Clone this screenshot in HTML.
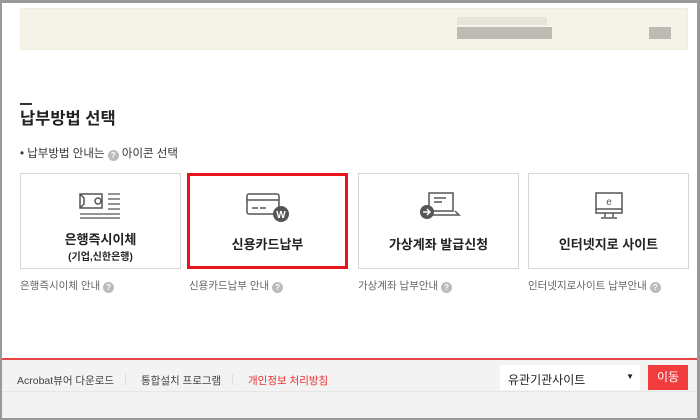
<!DOCTYPE html>
<html><head><meta charset="utf-8"><style>
*{margin:0;padding:0;box-sizing:border-box}
body{width:700px;height:420px;overflow:hidden;background:#999;font-family:"Liberation Sans","Noto Sans CJK KR",sans-serif;position:relative}
.main{position:absolute;left:2px;top:3px;width:695px;height:415px;background:#fff}
.top{position:absolute;left:18px;top:5px;width:668px;height:42px;background:#f5f2e7;border:1px solid #efece2}
.blur{position:absolute;background:#bdbbb4}
.ttl{position:absolute;left:18px;top:102px;font-size:16.5px;font-weight:bold;color:#222}
.dash{position:absolute;left:18px;top:100px;width:12px;height:2px;background:#333}
.bul{position:absolute;left:18px;top:142px;font-size:11.5px;color:#333}
.q{display:inline-block;width:11px;height:11px;border-radius:50%;background:#bbb;color:#fff;font-size:8px;text-align:center;line-height:11px;vertical-align:-1px;font-weight:bold}
.box{position:absolute;top:170px;height:96px;border:1px solid #d6d6d6;background:#fff;text-align:center}
.box.sel{border:3px solid #e8141b}
.box .t{position:absolute;left:0;right:0;top:60px;font-size:13px;font-weight:bold;color:#222}
.box svg{position:absolute;left:50%;transform:translateX(-50%);top:16px}
.cap{position:absolute;top:275px;font-size:10.5px;color:#666}
.foot{position:absolute;left:0;top:355px;width:695px;height:60px;background:#f3f3f3;border-top:2px solid #e84646}
.fl{position:absolute;top:13px;font-size:10.5px;color:#444}
.sep{position:absolute;top:14px;width:1px;height:11px;background:#ddd}
.selbox{position:absolute;left:498px;top:5px;width:140px;height:25px;background:#fff;font-size:12px;color:#222;padding:6px 8px}
.btn{position:absolute;left:646px;top:5px;width:40px;height:25px;background:#f03c3c;color:#fff;font-size:12px;text-align:center;line-height:25px}
</style></head><body>
<div class="main">
<div class="top">
<div class="blur" style="left:436px;top:8px;width:90px;height:8px;background:#e6e4db"></div>
<div class="blur" style="left:436px;top:18px;width:95px;height:12px"></div>
<div class="blur" style="left:628px;top:18px;width:22px;height:12px"></div>
</div>
<div class="dash"></div>
<div class="ttl">납부방법 선택</div>
<div class="bul">• 납부방법 안내는 <span class="q">?</span> 아이콘 선택</div>

<div class="box" style="left:18px;width:161px">
<svg width="44" height="32" viewBox="0 0 44 32" fill="none" stroke="#555" stroke-width="1.5"><path d="M1 4h22v14H1zM1 4l4 4v6l-4 4"/><circle cx="19" cy="11" r="3"/><path d="M29 4h12M29 9h12M29 14h12M29 19h12M1 24h40M1 28h40" stroke-width="1.3"/></svg>
<div class="t" style="top:55px">은행즉시이체<div style="font-size:10px;margin-top:0px">(기업,신한은행)</div></div></div>
<div class="box sel" style="left:185px;width:161px">
<svg width="46" height="32" viewBox="0 0 46 32" fill="none" stroke="#555" stroke-width="1.5"><rect x="2" y="2" width="32" height="20" rx="2"/><path d="M2 8h32M7 16h6M15 16h6"/><circle cx="36" cy="22" r="8" fill="#555" stroke="none"/><text x="36" y="26" font-size="10" fill="#fff" stroke="none" text-anchor="middle" font-weight="bold" font-family="Liberation Sans">W</text></svg>
<div class="t" style="top:58px">신용카드납부</div></div>
<div class="box" style="left:356px;width:161px">
<svg width="46" height="32" viewBox="0 0 46 32" fill="none" stroke="#555" stroke-width="1.5"><rect x="13" y="3" width="24" height="18"/><path d="M18 8h12M18 12h8M7 25h36l-4-4"/><circle cx="11" cy="22" r="7" fill="#555" stroke="none"/><path d="M7 22h7M11 19l3 3-3 3" stroke="#fff"/></svg>
<div class="t">가상계좌 발급신청</div></div>
<div class="box" style="left:526px;width:161px">
<svg width="40" height="32" viewBox="0 0 40 32" fill="none" stroke="#555" stroke-width="1.5"><rect x="7" y="3" width="26" height="20"/><path d="M7 19h26M16 23v4M24 23v4M12 28h16"/><text x="20" y="15" font-size="10" fill="#555" stroke="none" text-anchor="middle" font-family="Liberation Sans">e</text></svg>
<div class="t">인터넷지로 사이트</div></div>

<div class="cap" style="left:18px">은행즉시이체 안내 <span class="q">?</span></div>
<div class="cap" style="left:187px">신용카드납부 안내 <span class="q">?</span></div>
<div class="cap" style="left:356px">가상계좌 납부안내 <span class="q">?</span></div>
<div class="cap" style="left:526px">인터넷지로사이트 납부안내 <span class="q">?</span></div>

<div class="foot">
<div class="fl" style="left:15px">Acrobat뷰어 다운로드</div>
<div class="sep" style="left:123px"></div>
<div class="fl" style="left:139px">통합설치 프로그램</div>
<div class="sep" style="left:230px"></div>
<div class="fl" style="left:246px;color:#e83030">개인정보 처리방침</div>
<div class="selbox">유관기관사이트<span style="position:absolute;right:6px;top:7px;font-size:8px">▼</span></div>
<div class="btn">이동</div>
<div style="position:absolute;left:0;top:31px;width:695px;height:1px;background:#e6e6e6"></div>
</div>
</div>
</body></html>
